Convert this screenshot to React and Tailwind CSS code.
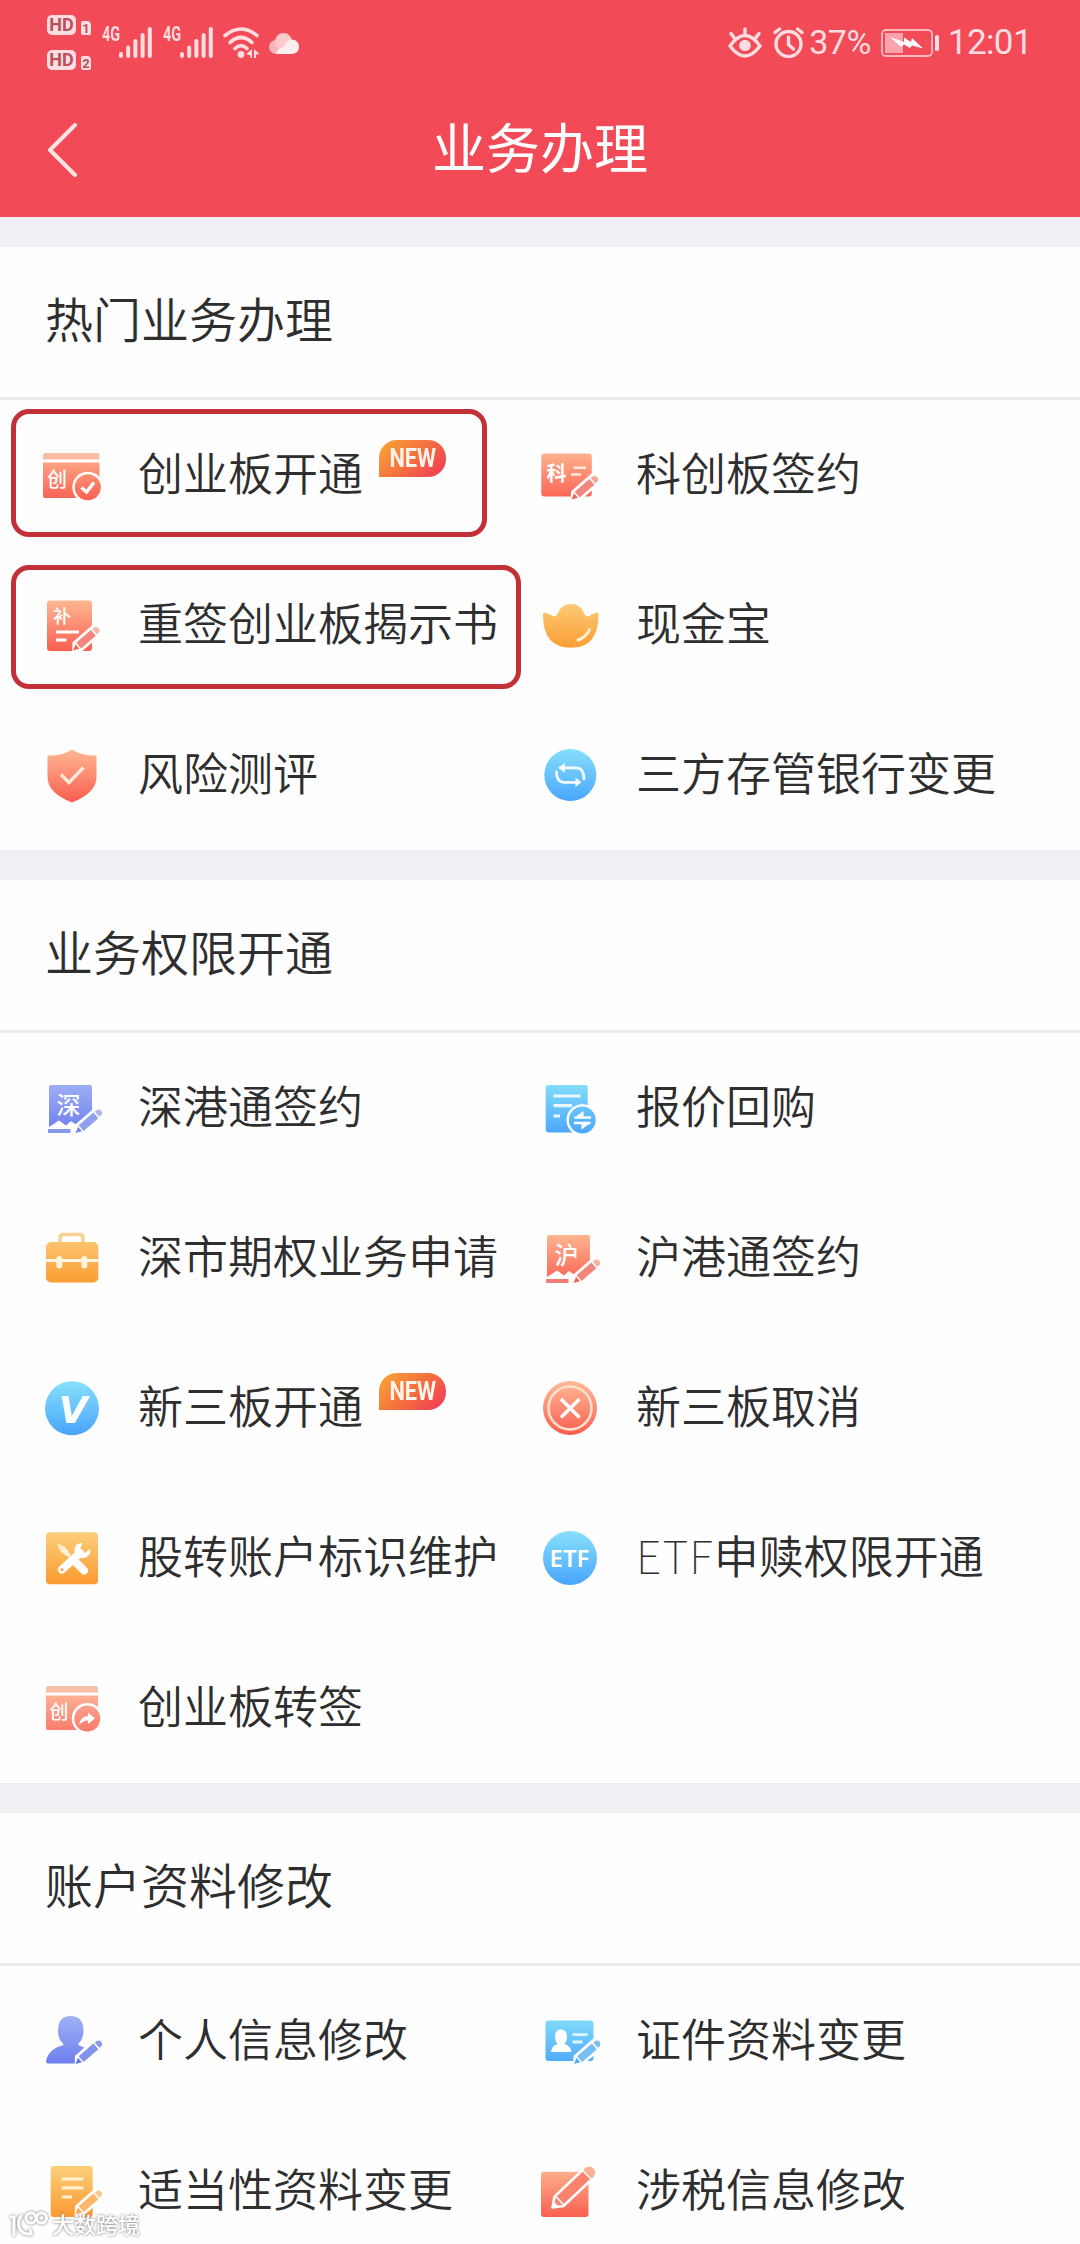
import React from 'react';
import clsx from 'clsx';

const CJK = 'Noto Sans CJK SC';

// shared gradients, referenced by every icon below
function Gradients() {
  const stops = {
    coral: ['#ffb994', '#fa5f50'],
    blue: ['#86dffb', '#4aa6fc'],
    orange: ['#fccf7c', '#fb9a30'],
    violet: ['#9fb2f3', '#6b7bf0'],
  };
  return (
    <svg className="absolute h-0 w-0" aria-hidden="true">
      <defs>
        {Object.entries(stops).map(([id, [from, to]]) => (
          <linearGradient key={id} id={id} gradientUnits="userSpaceOnUse" x1="0" y1="4" x2="0" y2="56">
            <stop offset="0" stopColor={from} />
            <stop offset="1" stopColor={to} />
          </linearGradient>
        ))}
      </defs>
    </svg>
  );
}

function Icon({ children }) {
  return (
    <svg viewBox="0 0 60 60" className="h-[60px] w-[60px] shrink-0">
      {children}
    </svg>
  );
}

function Pencil({ x, y, color, light }) {
  return (
    <g transform={`translate(${x} ${y}) rotate(-41)`}>
      <path d="M-3 2 L5 -6.5 H31 Q36 -6 36 0 T31 6.5 H5 Z" fill="#fff" />
      <path d="M0 0 L6 -3 V3 Z" fill={color} />
      <path d="M7.5 -3.8 H27 V3.8 H7.5 Z" fill={color} opacity="0.8" />
      <path d="M28.5 -3.4 H31 Q34 -3 34 0 T31 3.4 H28.5 Z" fill={light} />
    </g>
  );
}

function Glyph({ x, y, size, children, weight = 500 }) {
  return (
    <text x={x} y={y} fontSize={size} fontWeight={weight} fontFamily={CJK} fill="#fff">
      {children}
    </text>
  );
}

const CardCheck = () => (
  <Icon>
    <path d="M1 14.5 V10 Q1 8 3 8 H55.5 Q57.5 8 57.5 10 V14.5 Z" fill="#fbbd9f" />
    <path d="M1 17.5 H57.5 V53 H3 Q1 53 1 51 Z" fill="url(#coral)" />
    <Glyph x="5" y="41.5" size="20">创</Glyph>
    <circle cx="45.8" cy="42.3" r="15.5" fill="#fff" />
    <circle cx="45.8" cy="42.3" r="13" fill="url(#coral)" />
    <path d="M39.5 42.5 L44.5 47 L52 37.5" fill="none" stroke="#fff" strokeWidth="3.4" />
  </Icon>
);

const CardShare = () => (
  <Icon>
    <path d="M4 14.5 V10 Q4 8 6 8 H54 Q56 8 56 10 V14.5 Z" fill="#f8bfa9" />
    <path d="M4 17.5 H56 V52 H6 Q4 52 4 50 Z" fill="url(#coral)" opacity="0.85" />
    <Glyph x="7.5" y="41" size="19">创</Glyph>
    <circle cx="45.3" cy="40.5" r="15.5" fill="#fff" />
    <circle cx="45.3" cy="40.5" r="13" fill="url(#coral)" opacity="0.85" />
    <path d="M37 47 Q38 38.5 46 38 V34.5 L53 40.5 L46 46 V42.5 Q41 42.5 37 47 Z" fill="#fff" />
  </Icon>
);

const DocBu = () => (
  <Icon>
    <rect x="5" y="5.5" width="45" height="50.5" rx="3" fill="url(#coral)" />
    <Glyph x="11" y="28" size="18">补</Glyph>
    <path d="M14 37 H37 M14 45 H24.5" stroke="#fff" strokeWidth="3" />
    <Pencil x="31" y="55.5" color="#f0675c" light="#f5b6a4" />
  </Icon>
);

const Shield = () => (
  <Icon>
    <path d="M30 4.5 Q40 11 54.5 10.5 V32 Q54.5 48 30 57.5 Q5.5 48 5.5 32 V10.5 Q20 11 30 4.5 Z" fill="url(#coral)" />
    <path d="M19 29.5 L27 37.5 L41.5 22.5" fill="none" stroke="#ffe9d6" strokeWidth="3.4" />
  </Icon>
);

const DocKe = () => (
  <Icon>
    <rect x="1.3" y="8.5" width="50.5" height="43" rx="3" fill="url(#coral)" />
    <Glyph x="6.5" y="36" size="20" weight={700}>科</Glyph>
    <path d="M33.5 22.7 H46 M31 29.5 H41" stroke="#ffe6dc" strokeWidth="2.6" />
    <Pencil x="31.5" y="54.5" color="#f0675c" light="#f5a595" />
  </Icon>
);

const Ingot = () => (
  <Icon>
    <path d="M3 20 Q3 16.5 6.5 18 L13 21 Q16.5 22 18 18 Q21.5 9 31 9 T44 18 Q45.5 22 49 21 L55 18 Q58.5 16.5 58.5 20 Q58.5 52.7 31 52.7 Q3 52.7 3 20 Z" fill="url(#orange)" />
    <path d="M38 45 Q46 42.5 49.5 34.5" fill="none" stroke="#fff1d9" strokeWidth="3" strokeLinecap="round" />
  </Icon>
);

const Swap = () => (
  <Icon>
    <circle cx="30.3" cy="30" r="26" fill="url(#blue)" />
    <g fill="none" stroke="#f4fbff" strokeWidth="2.8" strokeLinecap="round">
      <path d="M22 22.8 H37 Q44 23.5 44 34" />
      <path d="M16.5 27 Q16.5 37 24 37.3 H37" />
    </g>
    <path d="M18 22.8 L25 18 V27.5 Z M41.5 37.3 L35.5 32.5 V42 Z" fill="#f4fbff" />
  </Icon>
);

function SignedSheet({ char, fill, color, light }) {
  return (
    <Icon>
      <path d="M7 9 Q7 7 9 7 H48 Q50 7 50 9 V48 L41 44 L36 48 L29 43 L24 47.5 L17 42.5 L7 49 Z" fill={`url(#${fill})`} />
      <path d="M6 53 H28.5" stroke={color} strokeWidth="4" opacity="0.85" />
      <Glyph x="14.5" y="35.5" size="24">{char}</Glyph>
      <Pencil x="33.5" y="55" color={color} light={light} />
    </Icon>
  );
}
const SheetShen = () => <SignedSheet char="深" fill="violet" color="#7488e8" light="#a9b6ee" />;
const SheetHu = () => <SignedSheet char="沪" fill="coral" color="#f0685b" light="#f5b09f" />;

const DocSwap = () => (
  <Icon>
    <rect x="5.7" y="7" width="42" height="47.5" rx="3" fill="url(#blue)" />
    <path d="M13.5 18 H40.5 M13.5 27.7 H32 M13.5 38 H20" stroke="#e9f8ff" strokeWidth="3.2" />
    <circle cx="42.3" cy="42" r="15.8" fill="#fff" />
    <circle cx="42.3" cy="42" r="13.4" fill="url(#blue)" />
    <path d="M34.5 39.5 H51 M50.5 45 H34" fill="none" stroke="#fff" strokeWidth="2.6" />
    <path d="M36 38.5 L43.5 33 V38.5 Z M49 46 L41.5 51.5 V46 Z" fill="#fff" />
  </Icon>
);

const Briefcase = () => (
  <Icon>
    <path d="M18 15 V10 Q18 6.5 21.5 6.5 H37.5 Q41 6.5 41 10 V15" fill="none" stroke="#f5d193" strokeWidth="3.6" />
    <rect x="4" y="14" width="52.3" height="40.5" rx="5" fill="url(#orange)" />
    <path d="M4 32.5 H56.3" stroke="#fff7e8" strokeWidth="3" />
    <path d="M17.3 31 V37.5 M42.3 31 V37.5" stroke="#fff3da" strokeWidth="6" strokeLinecap="round" />
  </Icon>
);

const VBadge = () => (
  <Icon>
    <circle cx="30" cy="30.3" r="27" fill="url(#blue)" />
    <text x="31" y="45" textAnchor="middle" fontSize="37" fontWeight="700" fontStyle="italic" fontFamily="DejaVu Sans" fill="#fff">V</text>
  </Icon>
);

const Cancel = () => (
  <Icon>
    <circle cx="30" cy="30" r="27" fill="url(#coral)" />
    <circle cx="30" cy="30" r="21.5" fill="none" stroke="#ffe0cf" strokeWidth="2.6" />
    <path d="M21 21 L39.5 39.5 M39.5 21 L21 39.5" stroke="#fff" strokeWidth="3.4" />
  </Icon>
);

const Tools = () => (
  <Icon>
    <rect x="4" y="4.3" width="52" height="52" rx="4" fill="url(#orange)" />
    <path d="M15 15.5 L23 19 L29 27 L26.5 29.5 L19 24 Z" fill="#fff0d6" />
    <path d="M34 34.5 L42 42.5" stroke="#fff" strokeWidth="8" strokeLinecap="round" />
    <path d="M20 41.5 L38 25" stroke="#fff" strokeWidth="8" strokeLinecap="round" />
    <path d="M40.5 15 Q33 15 32.5 21 Q32 27 37 29.5 Q43 31.5 46.5 27.5 Q49 25 48 21 L42.5 25 L38 21.5 Z" fill="#fff" />
    <circle cx="20" cy="41.7" r="1.6" fill="#fba63f" />
  </Icon>
);

const Etf = () => (
  <Icon>
    <circle cx="30" cy="30" r="27" fill="url(#blue)" />
    <text x="29.5" y="38.5" textAnchor="middle" fontSize="24" fontWeight="600" fontFamily="Noto Sans" fill="#fff">ETF</text>
  </Icon>
);

const Person = () => (
  <Icon>
    <path d="M28.7 5 Q41.5 5 41.5 20 Q41.5 28 36 33 Q37 35 41 36 L46 39 L34 52.5 H6 Q4 52.5 4 50.5 Q6 38 21.5 34 Q21.5 33 21 32.5 Q16 28 16 20 Q16 5 28.7 5 Z" fill="url(#violet)" />
    <Pencil x="33.5" y="53" color="#6478e6" light="#8b9ae8" />
  </Icon>
);

const IdCard = () => (
  <Icon>
    <rect x="5.5" y="9.5" width="48" height="40.5" rx="3" fill="url(#blue)" />
    <path d="M20.7 18.5 Q27 18.5 27 26 Q27 30 24.5 33 Q31 35 31.5 41 H11 Q11.5 35 17.5 33 Q15 30 15 26 Q15 18.5 20.7 18.5 Z" fill="#fff" />
    <path d="M32.5 23.7 H47.5 M32.5 31 H42.5" stroke="#dff5ff" strokeWidth="2.8" />
    <Pencil x="34" y="53" color="#58aef0" light="#7fbdf0" />
  </Icon>
);

const DocLines = () => (
  <Icon>
    <rect x="8.7" y="5" width="42" height="51" rx="3" fill="url(#orange)" />
    <path d="M19.7 18 H41.3 M19.7 26.8 H41.3 M19.7 36 H30" stroke="#fff0d2" strokeWidth="3.2" />
    <Pencil x="33.5" y="53" color="#fba544" light="#f6c98f" />
  </Icon>
);

const TaxEdit = () => (
  <Icon>
    <rect x="1" y="10.7" width="47.5" height="45.3" rx="3" fill="url(#coral)" />
    <g transform="translate(12.5 46.5) rotate(-43.5)">
      <path d="M0 0 L9 -6.5 H48 V6.5 H9 Z" fill="#f8846e" stroke="#fff" strokeWidth="2.6" strokeLinejoin="round" />
      <path d="M0 0 L5 -3.5 V3.5 Z" fill="#fff" />
      <path d="M48 -6 H51.5 Q56.5 -5 56.5 0 T51.5 6 H48 Z" fill="#fab196" />
      <path d="M10 -6 V6" stroke="#fff" strokeWidth="1.5" />
    </g>
  </Icon>
);

const sections = [
  {
    title: '热门业务办理',
    items: [
      { label: '创业板开通', icon: CardCheck, isNew: true, mark: 'top-[9px] h-32 w-[476px]' },
      { label: '科创板签约', icon: DocKe },
      { label: '重签创业板揭示书', icon: DocBu, mark: 'top-[15px] h-[124px] w-[510px]' },
      { label: '现金宝', icon: Ingot },
      { label: '风险测评', icon: Shield },
      { label: '三方存管银行变更', icon: Swap },
    ],
  },
  {
    title: '业务权限开通',
    items: [
      { label: '深港通签约', icon: SheetShen },
      { label: '报价回购', icon: DocSwap },
      { label: '深市期权业务申请', icon: Briefcase },
      { label: '沪港通签约', icon: SheetHu },
      { label: '新三板开通', icon: VBadge, isNew: true },
      { label: '新三板取消', icon: Cancel },
      { label: '股转账户标识维护', icon: Tools },
      { latin: 'ETF', label: '申赎权限开通', icon: Etf },
      { label: '创业板转签', icon: CardShare },
    ],
  },
  {
    title: '账户资料修改',
    items: [
      { label: '个人信息修改', icon: Person },
      { label: '证件资料变更', icon: IdCard },
      { label: '适当性资料变更', icon: DocLines },
      { label: '涉税信息修改', icon: TaxEdit },
    ],
  },
];

function HdTag({ sim }) {
  return (
    <div className="flex h-5 items-end gap-[5px] text-[#b9505c]">
      <span className="flex h-5 w-[29px] items-center justify-center rounded-[5px] bg-[#ffdde0] font-['Roboto'] text-[18px] leading-none font-bold">HD</span>
      <span className="flex h-[14px] w-[10px] items-center justify-center rounded-tl-[2px] rounded-tr-[4px] rounded-b-[2px] bg-[#ffdde0] font-['Roboto'] text-[13px] leading-none font-bold">{sim}</span>
    </div>
  );
}

function Signal() {
  return (
    <div className="flex h-[31px] w-[50px]">
      <span className="w-[17px] origin-left scale-x-[0.72] font-['Roboto'] text-[20px] leading-[15px] font-bold">4G</span>
      <svg viewBox="0 0 33 31" className="h-[31px] w-[33px] shrink-0">
        <path d="M2 27 V29 M9.2 20.5 V29 M16.4 14 V29 M23.6 8 V29 M30.8 2 V29" stroke="currentColor" strokeWidth="4" strokeLinecap="round" />
      </svg>
    </div>
  );
}

function StatusBar() {
  return (
    <div className="flex h-[86px] justify-between pr-12 pl-[47px] text-[#ffdde0]">
      <div className="flex items-start">
        <div className="mt-[15px] flex flex-col gap-[15px]">
          <HdTag sim="1" />
          <HdTag sim="2" />
        </div>
        <div className="mt-[27px] ml-[11px] flex">
          <Signal />
          <div className="ml-[11px]">
            <Signal />
          </div>
          <svg viewBox="0 0 37 31" className="ml-[10px] h-[31px] w-[37px]">
            <g fill="none" stroke="currentColor" strokeWidth="3.6" strokeLinecap="round">
              <path d="M2 8.5 Q18 -4.5 34 8.5" />
              <path d="M7 15.5 Q18 5.5 29 15.5" />
              <path d="M12 21.5 Q18 15.5 24 21.5" />
            </g>
            <circle cx="18" cy="27.5" r="3.4" fill="currentColor" />
            <path d="M23 27 L29 22 V31 H27.5 V28.5 Z M31 22 L36.5 27 L33 27.5 V31 H31 Z" fill="currentColor" />
          </svg>
          <svg viewBox="0 0 30 21" className="mt-[6px] ml-[9px] h-[21px] w-[30px]">
            <circle cx="7" cy="14" r="7" fill="#f9b3b9" />
            <circle cx="14.5" cy="8.5" r="8.5" fill="#fcc9cd" />
            <path d="M7 21 Q9 14 15 14 Q17 6 23 6.5 Q30 7 30 14 Q30 21 22 21 Z" fill="#ffeef0" />
          </svg>
        </div>
      </div>

      <div className="mt-[27px] flex h-[31px] items-center font-normal">
        <svg viewBox="0 0 34 31" className="h-[31px] w-[34px]">
          <g fill="none" stroke="currentColor" strokeWidth="3.4" strokeLinecap="round">
            <path d="M2 19 Q17 -2 32 19 Q17 39 2 19 Z" strokeLinejoin="round" />
            <path d="M17 2 V7 M3 6.5 L6 10.5 M31 6.5 L28 10.5" />
          </g>
          <circle cx="17" cy="18.5" r="5.8" fill="currentColor" />
        </svg>
        <svg viewBox="0 0 31 31" className="ml-[11px] h-[31px] w-[31px]">
          <g fill="none" stroke="currentColor" strokeWidth="3.4" strokeLinecap="round">
            <circle cx="15.5" cy="17" r="12.5" />
            <path d="M15.5 10 V17.5 L20.5 22" />
            <path d="M2 5.5 L6.5 2 M29 5.5 L24.5 2" />
          </g>
        </svg>
        <span className="ml-[5px] font-['Roboto'] text-[34px] leading-[31px] tracking-[-0.5px]">37%</span>
        <svg viewBox="0 0 58 28" className="ml-[10px] h-7 w-[58px]">
          <rect x="1" y="1" width="50" height="26" rx="4" fill="none" stroke="#fbb9bf" strokeWidth="1.8" />
          <rect x="4" y="4" width="18" height="20" fill="#f9a3ab" />
          <path d="M9 8 L23 13 L23 8.5 L30 13 L31 9 L42 19.5 L31 16.5 L29 19 L23 15.5 L20 18 Z" fill="#fff" />
          <rect x="54" y="6" width="4" height="16" rx="1.5" fill="currentColor" />
        </svg>
        <span className="ml-[9px] font-['Roboto'] text-[35px] leading-[31px] tracking-[-0.6px]">12:01</span>
      </div>
    </div>
  );
}

function Header() {
  return (
    <header className="h-[217px] bg-[#f24a57]">
      <StatusBar />
      <div className="relative flex h-[126px] items-center justify-center pb-[6px]">
        <svg viewBox="0 0 30 54" className="absolute top-[37px] left-[48px] h-[54px] w-[30px]">
          <path d="M27 2 L2 27 L27 52" fill="none" stroke="#ffe3e5" strokeWidth="4" strokeLinecap="round" strokeLinejoin="round" />
        </svg>
        <h1 className="text-[54px] leading-none font-normal text-white">业务办理</h1>
      </div>
    </header>
  );
}

function NewBadge() {
  return (
    <span className="mt-10 ml-4 flex h-[37px] w-[67px] items-center justify-center self-start rounded-t-[18px] rounded-br-[18px] bg-linear-[135deg,#f9a834,#f4703f_50%,#f0355a] font-['Roboto'] text-[25px] leading-none font-bold text-[#fff3ea]">
      <span className="scale-x-[0.87]">NEW</span>
    </span>
  );
}

function Item({ label, latin, icon: ItemIcon, isNew, mark }) {
  return (
    <div className="relative flex h-[150px] items-center pl-[42px]">
      <ItemIcon />
      <span className="mb-[7px] ml-9 text-[45px] leading-[60px] whitespace-nowrap">
        {latin && <span className="font-thin tracking-[1.1px]">{latin}</span>}
        {label}
      </span>
      {isNew && <NewBadge />}
      {mark && <span className={clsx('absolute left-[11px] rounded-[18px] border-[5px] border-[#c23138]', mark)} />}
    </div>
  );
}

function Watermark() {
  return (
    <div className="absolute bottom-[5px] left-[8px] flex items-end gap-[3px] text-white drop-shadow-[0_0_1.5px_#777]">
      <svg viewBox="0 0 41 28" className="h-7 w-[41px]" fill="none" stroke="currentColor" strokeWidth="3">
        <path d="M2 6 H6 V25" />
        <path d="M14 4 Q9 9 11 16 Q14 24 23 23 L22 18" />
        <circle cx="23" cy="7" r="5" />
        <circle cx="33.5" cy="7" r="5" />
      </svg>
      <span className="mb-[3px] text-[22px] leading-[26px] font-medium">大数跨境</span>
    </div>
  );
}

export default function App() {
  return (
    <div className="relative h-[2244px] w-[1080px] overflow-hidden bg-[#efeff4] font-['Noto_Sans_CJK_SC',sans-serif] font-[350] text-[#2e2e2e]">
      <Gradients />
      <Header />
      {sections.map((section) => (
        <section key={section.title} className="mt-[30px] bg-[#fefefe]">
          <h2 className="flex h-[153px] items-center border-b-[3px] border-[#ebebeb] pb-[11px] pl-[45px] text-[48px] leading-none font-[350]">
            {section.title}
          </h2>
          <div className="grid grid-cols-[498px_1fr]">
            {section.items.map((item) => (
              <Item key={item.label} {...item} />
            ))}
          </div>
        </section>
      ))}
      <Watermark />
    </div>
  );
}
